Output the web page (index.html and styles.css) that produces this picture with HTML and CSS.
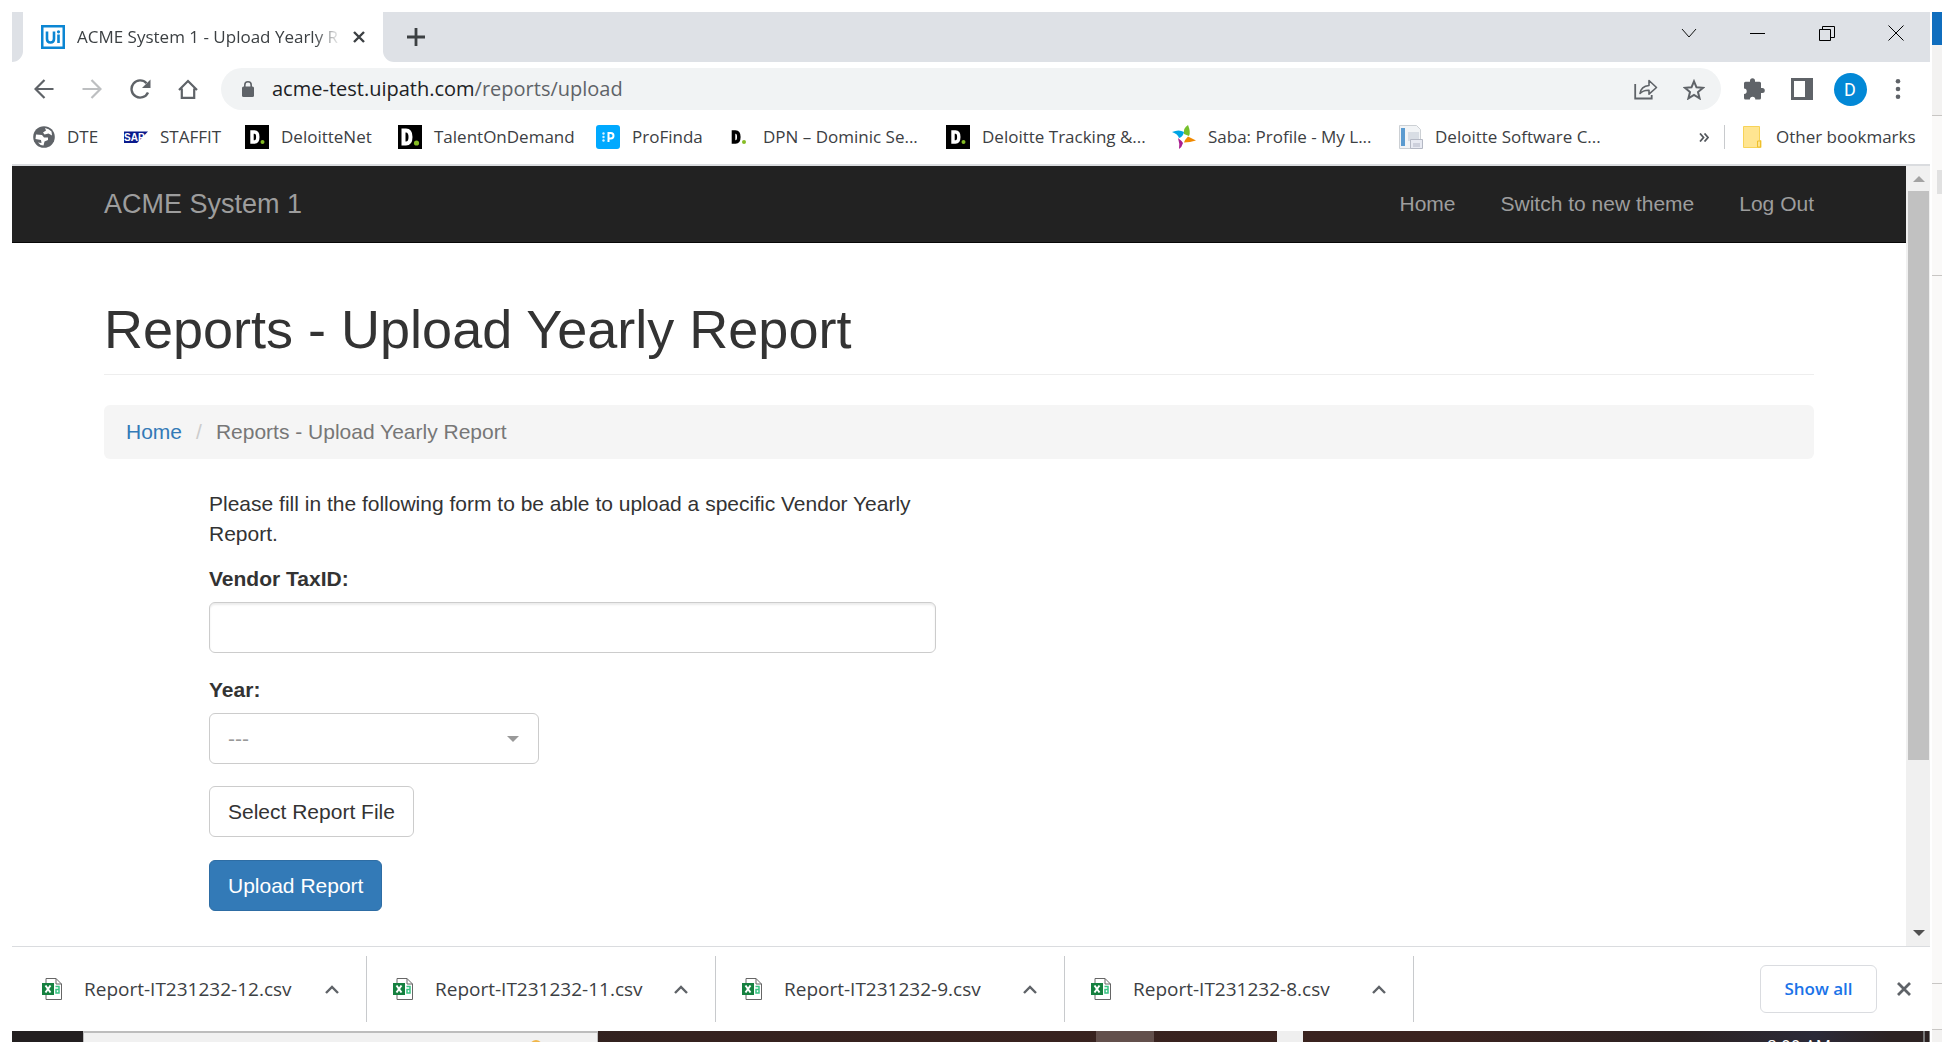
FILE: index.html
```html
<!DOCTYPE html>
<html lang="en">
<head>
<meta charset="utf-8">
<title>ACME System 1 - Upload Yearly Report</title>
<link rel="stylesheet" href="styles.css">
</head>
<body>
<svg class="defs" aria-hidden="true">
  <symbol id="csv" viewBox="0 0 20 22">
    <path d="M4 .5h10l5.500 5.500v15.500H4z" fill="#fff" stroke="#666"/>
    <path d="M14 .5v5.500h5.500" fill="none" stroke="#666"/>
    <path d="M0 5h12v12H0z" fill="#15803f"/>
    <path d="M3.500 7.500l5 7M8.500 7.500l-5 7" stroke="#fff" stroke-width="2"/>
    <path d="M13.500 8.500h3.500v6.500h-3v-3.500h3" fill="none" stroke="#37c482" stroke-width="1.500"/>
  </symbol>
  <symbol id="up" viewBox="0 0 14 9"><path d="M1 8l6-6 6 6" fill="none" stroke="#5f6368" stroke-width="2.400"/></symbol>
</svg>
<div class="screen">
  <div class="window">
    <header class="tabstrip">
      <div class="edge"></div>
      <div class="tab">
        <svg width="24" height="24" viewBox="0 0 24 24"><path d="M0 0h24v24H0z" fill="#0b86d3"/><path d="M2.500 2.500h19v19h-19z" fill="#fff"/><path d="M6 6.500v7.500q0 3.500 3.500 3.500T13 14V6.500M17.500 9.500v8.500" fill="none" stroke="#0b86d3" stroke-width="2.600"/><circle cx="17.500" cy="6.800" r="1.600" fill="#0b86d3"/></svg>
        <span class="tab-title">ACME System 1 - Upload Yearly R</span>
        <button class="icon-btn" aria-label="Close tab"><svg width="12" height="12" viewBox="0 0 12 12"><path d="M1 1l10 10M11 1L1 11" stroke="#3c4043" stroke-width="2.400"/></svg></button>
      </div>
      <div class="strip-rest">
        <button class="icon-btn" aria-label="New tab"><svg width="18" height="18" viewBox="0 0 18 18"><path d="M9 0v18M0 9h18" stroke="#3c4043" stroke-width="2.800"/></svg></button>
        <div class="win-controls">
          <button class="icon-btn" aria-label="Search tabs"><svg width="16" height="16" viewBox="0 0 16 16"><path d="M1 4l7 8 7-8" fill="none" stroke="#111"/></svg></button>
          <button class="icon-btn" aria-label="Minimize"><svg width="16" height="16" viewBox="0 0 16 16"><path d="M0 8.500h15" stroke="#000"/></svg></button>
          <button class="icon-btn" aria-label="Restore"><svg width="16" height="16" viewBox="0 0 16 16"><path d="M.5 4.500h11v11H.5zM3.500 4.500v-3h12v11h-4" fill="none" stroke="#000"/></svg></button>
          <button class="icon-btn" aria-label="Close"><svg width="16" height="16" viewBox="0 0 16 16"><path d="M.5.5l15 15M15.500.5l-15 15" stroke="#000"/></svg></button>
        </div>
      </div>
    </header>

    <div class="toolbar">
      <button class="icon-btn" aria-label="Back"><svg width="20" height="20" viewBox="0 0 20 20"><path d="M19.500 10H2M10.500 1L1.500 10l9 9" fill="none" stroke="#5f6368" stroke-width="2.200"/></svg></button>
      <button class="icon-btn" aria-label="Forward"><svg width="20" height="20" viewBox="0 0 20 20"><path d="M.5 10H18M9.500 1l9 9-9 9" fill="none" stroke="#bdbfc1" stroke-width="2.200"/></svg></button>
      <button class="icon-btn" aria-label="Reload"><svg width="22" height="20" viewBox="0 0 22 20"><path d="M19 13.500A8.600 8.600 0 1 1 17.500 4.200" fill="none" stroke="#5f6368" stroke-width="2.400"/><path d="M21.500 .5V9H13z" fill="#5f6368"/></svg></button>
      <button class="icon-btn" aria-label="Home"><svg width="20" height="20" viewBox="0 0 20 20"><path d="M1 11l9-9 9 9M3.800 9.500v9.300h12.400V9.500" fill="none" stroke="#5f6368" stroke-width="2.200"/></svg></button>
      <div class="omnibox">
        <svg width="14" height="16" viewBox="0 0 14 16"><rect x="1" y="5.500" width="12" height="10.500" rx="1.500" fill="#5f6368"/><path d="M3.800 6V4a3.200 3.200 0 0 1 6.400 0v2" fill="none" stroke="#5f6368" stroke-width="1.600"/></svg>
        <div class="url">acme-test.uipath.com<span class="path">/reports/upload</span></div>
        <button class="icon-btn" aria-label="Share"><svg width="24" height="22" viewBox="0 0 24 22"><path d="M1.200 6v14.500h16.500V17" fill="none" stroke="#5f6368" stroke-width="1.800"/><path d="M6 15.500Q7 8.200 15 7.500V2.500l7.500 7L15 16.200v-4Q9 12 6 15.500z" fill="none" stroke="#5f6368" stroke-width="1.600" stroke-linejoin="round"/></svg></button>
        <button class="icon-btn" aria-label="Bookmark"><svg width="22" height="21" viewBox="0 0 22 21"><path d="M11 2.300l2.500 6 6.500.5-5 4.200 1.600 6.400L11 16l-5.600 3.400L7 13 2 8.800l6.500-.5z" fill="none" stroke="#5f6368" stroke-width="2"/></svg></button>
      </div>
      <button class="icon-btn" aria-label="Extensions"><svg width="22" height="22" viewBox="0 0 22 22"><path d="M2.500 3.800H7V2.700a2.500 2.500 0 0 1 5 0v1.100h4.500q1.500 0 1.500 1.500V10h1.300a2.500 2.500 0 0 1 0 5H18v5q0 1.500-1.500 1.500h-4.200a2.700 2.700 0 0 0-5.400 0H2.500Q1 21.500 1 20v-4a2.700 2.700 0 0 0 0-5.400V5.300q0-1.500 1.500-1.500z" fill="#5f6368"/></svg></button>
      <button class="icon-btn" aria-label="Side panel"><svg width="22" height="22" viewBox="0 0 22 22"><path d="M0 0h22v22H0z" fill="#5f6368"/><path d="M3 3h11v16H3z" fill="#fff"/></svg></button>
      <button class="icon-btn" aria-label="Profile"><span class="avatar">D</span></button>
      <button class="icon-btn" aria-label="Menu"><svg width="6" height="20" viewBox="0 0 6 20"><g fill="#5f6368"><circle cx="3" cy="2.300" r="2.300"/><circle cx="3" cy="10" r="2.300"/><circle cx="3" cy="17.700" r="2.300"/></g></svg></button>
    </div>

    <nav class="bookmarks" aria-label="Bookmarks">
      <a href="#"><svg width="22" height="22" viewBox="0 0 22 22"><circle cx="11" cy="11" r="10.800" fill="#5f6368"/><path d="M3 8.500l6 .5 2 2.500h4v2.500l-3.500 1.500-1 4q-4-.5-5.500-3l3.500.5-.5-3-5.500-1zM12 2l1 2.500-3 2 1.500 2 4-1 3.500 2-.5-4Q16 2.500 12 2z" fill="#fff"/></svg>DTE</a>
      <a href="#"><svg width="24" height="24" viewBox="0 0 24 24"><path d="M0 6.500h24L13 18H0z" fill="#0a1a8c"/><text x="0" y="16" class="sap">SAP</text></svg>STAFFIT</a>
      <a href="#"><svg width="24" height="24" viewBox="0 0 24 24"><path d="M0 0h24v24H0z"/><path d="M7 7h2.500q3.300 0 3.300 5T9.500 17H7z" fill="none" stroke="#fff" stroke-width="3.400"/><circle cx="17.500" cy="17" r="2" fill="#86bc25"/></svg>DeloitteNet</a>
      <a href="#"><svg width="24" height="24" viewBox="0 0 24 24"><path d="M0 0h24v24H0z"/><path d="M5.500 5.500h2.500q4.500 0 4.500 6.500T8 18.500H5.500z" fill="none" stroke="#fff" stroke-width="4"/><circle cx="18.500" cy="18" r="2.600" fill="#86bc25"/></svg>TalentOnDemand</a>
      <a href="#"><svg width="24" height="24" viewBox="0 0 24 24"><rect width="24" height="24" rx="3" fill="#00a9ff"/><path d="M12.500 17V8h2.300a2.700 2.700 0 0 1 0 5.400h-2" fill="none" stroke="#fff" stroke-width="2"/><g fill="#d9f2ff"><circle cx="7.500" cy="8.500" r="1.200"/><circle cx="7.500" cy="12" r="1.200"/><circle cx="7.500" cy="15.500" r="1.200"/></g></svg>ProFinda</a>
      <a href="#"><svg width="24" height="24" viewBox="0 0 24 24"><path d="M6.500 7h2q3.300 0 3.300 5t-3.300 5h-2z" fill="none" stroke="#000" stroke-width="3.600"/><circle cx="17" cy="17" r="2" fill="#86bc25"/></svg>DPN – Dominic Se...</a>
      <a href="#"><svg width="24" height="24" viewBox="0 0 24 24"><path d="M0 0h24v24H0z"/><path d="M7 7h2.500q3.300 0 3.300 5T9.500 17H7z" fill="none" stroke="#fff" stroke-width="3.400"/><circle cx="17.500" cy="17" r="2" fill="#86bc25"/></svg>Deloitte Tracking &amp;...</a>
      <a href="#"><svg width="24" height="24" viewBox="0 0 24 24"><path d="M16 0q-5 3-4 9l5 2q2-4-1-11z" fill="#76c02b"/><path d="M0 7q7-3 12 0-1 5-5 6-1-4-7-6z" fill="#00a4e4"/><path d="M6 13q4 3 5 5-1 4-4 6 1-5-1-11z" fill="#a81d8f"/><path d="M24 15.500l-8-4q-3 3-4 6 6 0 12-2z" fill="#f18a00"/></svg>Saba: Profile - My L...</a>
      <a href="#"><svg width="24" height="24" viewBox="0 0 24 24"><path d="M.5.500h17l4 4v19H.5z" fill="#f2f4f6" stroke="#ccd0d4"/><path d="M2 3h4v18H2z" fill="#5b9bd0"/><path d="M9 7h11v9H9z" fill="#d8dde4"/><path d="M11.500 14.500h12v9h-12z" fill="#e8eaf2" stroke="#b4b8c4"/><path d="M14 18h7v4h-7z" fill="#cdd0dc"/></svg>Deloitte Software C...</a>
      <button class="icon-btn more" aria-label="More bookmarks"><svg width="10" height="9" viewBox="0 0 10 9"><path d="M1 .5l3.500 4L1 8.500M5.500.5L9 4.500l-3.500 4" fill="none" stroke="#55595e" stroke-width="1.800"/></svg></button>
      <a href="#" class="other"><svg width="19" height="22" viewBox="0 0 19 22"><path d="M.5.500h16v14h1.500v7H.5z" fill="#ffe591" stroke="#f7d358"/><path d="M14.500 21v-6h3v6z" fill="#ffe591" stroke="#eebf2c"/></svg>Other bookmarks</a>
    </nav>

    <div class="viewport">
      <main class="page">
        <nav class="navbar">
          <div class="container nav-row">
            <a class="brand" href="#">ACME System 1</a>
            <a href="#">Home</a><a href="#">Switch to new theme</a><a href="#">Log Out</a>
          </div>
        </nav>
        <div class="container content">
          <h1>Reports - Upload Yearly Report</h1>
          <ol class="breadcrumb"><li><a href="#">Home</a></li><li>Reports - Upload Yearly Report</li></ol>
          <form class="form">
            <p>Please fill in the following form to be able to upload a specific Vendor Yearly Report.</p>
            <label for="tax">Vendor TaxID:</label>
            <input id="tax" class="control" type="text">
            <label for="year">Year:</label>
            <div class="select-wrap">
              <select id="year" class="control"><option>---</option></select>
              <svg width="12" height="6" viewBox="0 0 12 6"><path d="M0 0h12L6 6z" fill="#999"/></svg>
            </div>
            <button type="button" class="btn">Select Report File</button>
            <button type="button" class="btn primary">Upload Report</button>
          </form>
        </div>
      </main>
      <div class="scrollbar">
        <svg width="12" height="6" viewBox="0 0 12 6"><path d="M6 0l6 6H0z" fill="#a3a3a3"/></svg>
        <div class="track"><div class="thumb"></div></div>
        <svg width="12" height="6" viewBox="0 0 12 6"><path d="M0 0h12L6 6z" fill="#505050"/></svg>
      </div>
    </div>

    <footer class="downloads">
      <div class="file"><svg width="20" height="22"><use href="#csv"/></svg><span>Report-IT231232-12.csv</span><button class="icon-btn" aria-label="File options"><svg width="14" height="9"><use href="#up"/></svg></button></div>
      <div class="file"><svg width="20" height="22"><use href="#csv"/></svg><span>Report-IT231232-11.csv</span><button class="icon-btn" aria-label="File options"><svg width="14" height="9"><use href="#up"/></svg></button></div>
      <div class="file"><svg width="20" height="22"><use href="#csv"/></svg><span>Report-IT231232-9.csv</span><button class="icon-btn" aria-label="File options"><svg width="14" height="9"><use href="#up"/></svg></button></div>
      <div class="file"><svg width="20" height="22"><use href="#csv"/></svg><span>Report-IT231232-8.csv</span><button class="icon-btn" aria-label="File options"><svg width="14" height="9"><use href="#up"/></svg></button></div>
      <button class="show-all">Show all</button>
      <button class="icon-btn" aria-label="Close downloads"><svg width="14" height="14" viewBox="0 0 14 14"><path d="M1 1l12 12M13 1L1 13" stroke="#5f6368" stroke-width="2.800"/></svg></button>
    </footer>

    <div class="taskbar">
      <div class="search"><svg width="24" height="4" viewBox="0 0 24 4"><circle cx="12" cy="12" r="12" fill="#f0b64a"/></svg></div>
      <div class="app"></div>
      <div class="tray"></div>
      <div class="clock">8:00 AM</div>
      <div class="peek"></div>
    </div>
  </div>
  <aside class="behind">
    <div class="title"></div><div class="ribbon"></div><div class="gap"></div><div class="field"></div><div class="pane"></div><div class="body"></div><div class="status"></div><div class="foot"></div>
  </aside>
</div>
</body>
</html>
```
FILE: styles.css
```css
* { box-sizing: border-box; }
body { margin: 0; background: #fff; font-family: "Open Sans", "Noto Sans", sans-serif; color: #3c4043; }
svg { display: block; flex: none; }
a { color: inherit; text-decoration: none; }
.defs { position: absolute; width: 0; height: 0; }
.screen { display: flex; min-height: 100vh; padding: 12px 0 0 12px; }
.window { flex: 1; min-width: 0; display: flex; flex-direction: column; }
.icon-btn { display: flex; align-items: center; justify-content: center; padding: 0; border: 0; background: none; }

.tabstrip { display: flex; height: 50px; background: #fff; }
.edge { width: 11px; background: #dee1e6; border-bottom-right-radius: 11px; }
.tab { display: flex; align-items: center; width: 360px; padding: 0 18px; gap: 12px; background: #fff; }
.tab-title { flex: 1; overflow: hidden; white-space: nowrap; font-size: 17px; line-height: 24px; -webkit-mask-image: linear-gradient(90deg, #000 90%, transparent); mask-image: linear-gradient(90deg, #000 90%, transparent); }
.strip-rest { flex: 1; display: flex; align-items: center; justify-content: space-between; padding-left: 24px; background: #dee1e6; border-bottom-left-radius: 11px; }
.win-controls { display: flex; align-self: flex-start; }
.win-controls .icon-btn { width: 69px; height: 41px; }

.toolbar { display: flex; align-items: center; height: 54px; padding: 0 8px; }
.toolbar .icon-btn { width: 48px; height: 42px; }
.omnibox { display: flex; align-items: center; flex: 1; height: 42px; margin: 0 9px; padding: 0 3px 0 20px; border-radius: 21px; background: #f1f3f4; }
.url { flex: 1; padding-left: 17px; font-size: 20px; line-height: 28px; color: #202124; }
.path { color: #5f6368; }
.avatar { width: 33px; height: 33px; border-radius: 50%; background: #0288d6; color: #fff; font: 18px/33px Roboto, sans-serif; }

.bookmarks { display: grid; grid-template-columns: 91px 121px 153px 198px 131px 219px 226px 227px 1fr 40px 206px; align-items: center; height: 50px; padding: 0 0 6px 21px; border-bottom: 2px solid #dadcdf; font-size: 17px; line-height: 24px; white-space: nowrap; }
.bookmarks a { display: flex; align-items: center; gap: 12px; }
.bookmarks .other { gap: 14px; padding-left: 18px; border-left: 1px solid #c8cacd; }
.sap { font: bold 10px "Liberation Sans", sans-serif; fill: #fff; }

.viewport { flex: 1; display: flex; font-family: "Liberation Sans", Arial, sans-serif; font-size: 21px; line-height: 30px; color: #333; }
.page { flex: 1; }
.container { max-width: 1710px; margin: 0 auto; }
.navbar { background: #222; border-bottom: 1px solid #080808; color: #9d9d9d; }
.nav-row { display: flex; align-items: center; height: 76px; gap: 45px; }
.brand { margin-right: auto; font-size: 27px; }
.content { padding-top: 57px; }
h1 { margin: 0 0 30px; padding-bottom: 15px; border-bottom: 1px solid #eee; font-size: 54px; line-height: 59px; font-weight: 400; }
.breadcrumb { display: flex; list-style: none; margin: 0 0 30px; padding: 12px 22px; border-radius: 6px; background: #f5f5f5; color: #777; }
.breadcrumb a { color: #337ab7; }
.breadcrumb li + li::before { content: "/"; padding: 0 14px; color: #ccc; }
.form { display: flex; flex-direction: column; align-items: flex-start; width: 727px; margin-left: 105px; }
.form p { margin: 0 0 15px; }
.form label { margin-bottom: 8px; font-weight: 700; }
.control { width: 100%; height: 51px; padding: 0 18px; border: 1px solid #ccc; border-radius: 6px; background: #fff; font: inherit; color: #999; }
input.control { margin-bottom: 22px; box-shadow: inset 0 2px 2px rgba(0, 0, 0, .075); }
.select-wrap { display: grid; align-items: center; width: 330px; margin-bottom: 22px; }
.select-wrap > * { grid-area: 1 / 1; }
.select-wrap svg { justify-self: end; margin-right: 20px; }
select.control { appearance: none; }
.btn { height: 51px; padding: 0 18px; margin-bottom: 23px; border: 1px solid #ccc; border-radius: 6px; background: #fff; font: inherit; color: #333; }
.primary { background: #337ab7; border-color: #2e6da4; color: #fff; }

.scrollbar { display: flex; flex-direction: column; align-items: center; width: 24px; padding: 10px 1px 10px 2px; gap: 9px; background: #f0f0f0; }
.track { flex: 1; align-self: stretch; }
.thumb { height: 78%; background: #c1c1c1; }

.downloads { display: flex; align-items: center; height: 85px; padding-right: 19px; border-top: 1px solid #dadcdf; font-size: 19px; line-height: 26px; }
.file { display: flex; align-items: center; width: 349px; height: 66px; padding: 0 27px 0 26px; border-right: 1px solid #c8cacd; }
.file:first-child { width: 355px; padding-left: 30px; }
.file span { flex: 1; padding-left: 22px; white-space: nowrap; }
.show-all { width: 117px; height: 48px; margin: 0 20px 0 auto; padding: 0; border: 1px solid #dadce0; border-radius: 6px; background: #fff; color: #1a73e8; font: 600 17px/24px "Open Sans", sans-serif; }

.taskbar { display: flex; height: 11px; overflow: hidden; background: linear-gradient(90deg, #231f20 4%, #35221f 35%, #3b231f 75%, #2c2222 87%, #2b2a38 94%, #2c2222 98%); }
.search { display: flex; justify-content: flex-end; align-items: flex-end; width: 515px; height: 11px; margin-left: 71px; padding-right: 49px; border: 1px solid #bdbdbd; border-top-width: 2px; border-bottom: 0; background: #f1f1f1; }
.search svg { height: 2px; }
.app { width: 58px; margin-left: 498px; background: #63504c; }
.tray { width: 26px; margin-left: 123px; background: #efefef; }
.clock { margin-left: auto; padding: 6px 92px 0 0; color: #fff; font-size: 17px; line-height: 18px; }
.peek { width: 7px; border: solid #777; border-width: 0 1px 0 2px; }

.behind { display: flex; flex-direction: column; width: 12px; padding-left: 2px; }
.behind div { background: #faf9f8; }
.behind .title { height: 33px; background: #106ebe; }
.behind .ribbon { height: 71px; background: #f3f2f1; border-bottom: 1px solid #c8c6c4; }
.behind .gap { height: 54px; }
.behind .field { height: 24px; border-left: 5px solid #faf9f8; background: #e1e1e1; }
.behind .pane { height: 82px; border-bottom: 1px solid #c8c6c4; }
.behind .body { flex: 1; border-bottom: 1px solid #c8c6c4; }
.behind .status { height: 46px; border-bottom: 1px solid #c8c6c4; }
.behind .foot { height: 12px; background: #f3f2f1; }
```
